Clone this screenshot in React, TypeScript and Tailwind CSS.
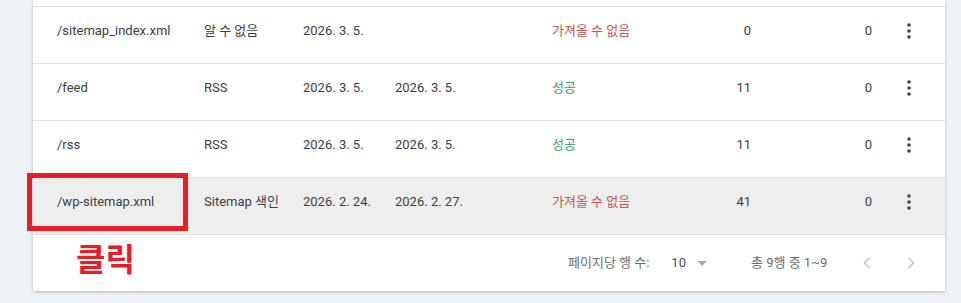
import React from 'react';

type Row = {
  path: string;
  type: string;
  submitted: string;
  read: string;
  status: 'ok' | 'fail';
  pages: string;
  videos: string;
  selected?: boolean;
};

const rows: Row[] = [
  { path: '/sitemap_index.xml', type: '알 수 없음', submitted: '2026. 3. 5.', read: '', status: 'fail', pages: '0', videos: '0' },
  { path: '/feed', type: 'RSS', submitted: '2026. 3. 5.', read: '2026. 3. 5.', status: 'ok', pages: '11', videos: '0' },
  { path: '/rss', type: 'RSS', submitted: '2026. 3. 5.', read: '2026. 3. 5.', status: 'ok', pages: '11', videos: '0' },
  { path: '/wp-sitemap.xml', type: 'Sitemap 색인', submitted: '2026. 2. 24.', read: '2026. 2. 27.', status: 'fail', pages: '41', videos: '0', selected: true },
];

const cols = 'grid grid-cols-[147px_99px_92px_157px_140px_59px_121px_73px]';

const Kebab = () => (
  <svg width="4" height="16" viewBox="0 0 4 16" className="text-[#454545]">
    <circle cx="2" cy="2" r="1.8" fill="currentColor" />
    <circle cx="2" cy="8" r="1.8" fill="currentColor" />
    <circle cx="2" cy="14" r="1.8" fill="currentColor" />
  </svg>
);

const Chevron = ({ dir }: { dir: 'left' | 'right' }) => (
  <svg width="8" height="12" viewBox="0 0 8 12" fill="none" stroke="#c4c4c4" strokeWidth="1.6">
    {dir === 'left' ? <path d="M6.5 1 L1.5 6 L6.5 11" /> : <path d="M1.5 1 L6.5 6 L1.5 11" />}
  </svg>
);

const SitemapRow = ({ row }: { row: Row }) => (
  <div className={`relative border-b border-[#e0e0e0] ${row.selected ? 'bg-[#eeeeee]' : 'bg-white'}`}>
    <div className={`${cols} pl-6 pt-[14px] pb-[22px] text-[13px] leading-5 text-[#3c4043]`}>
      <div>{row.path}</div>
      <div>{row.type}</div>
      <div>{row.submitted}</div>
      <div>{row.read}</div>
      <div className={row.status === 'ok' ? 'text-[#3a9d68]' : 'text-[#cc5550]'}>
        {row.status === 'ok' ? '성공' : '가져올 수 없음'}
      </div>
      <div className="text-right">{row.pages}</div>
      <div className="text-right">{row.videos}</div>
      <div className="flex items-center justify-center">
        <Kebab />
      </div>
    </div>
    {row.selected && (
      <div className="absolute left-[-6px] top-[-5px] w-[161px] h-[58px] border-[5px] border-[#e3202a]" />
    )}
  </div>
);

export default function App() {
  return (
    <div
      className="w-[961px] h-[303px] bg-[#eef1f6] overflow-hidden"
      style={{ fontFamily: 'Roboto, "Noto Sans CJK KR", sans-serif' }}
    >
      <div className="ml-[33px] w-[912px] bg-white shadow-[0_1px_3px_rgba(0,0,0,0.25)]">
        <div className="h-[7px] border-b border-[#e0e0e0]" />
        {rows.map((r) => (
          <SitemapRow key={r.path} row={r} />
        ))}
        <div className="relative h-[56px] flex items-center text-[13px] text-[#6b6f73]">
          <span
            className="absolute left-[43px] top-[6px] text-[32px] leading-none font-bold text-[#e3202a]"
            style={{ fontFamily: '"Noto Sans CJK KR", sans-serif' }}
          >
            클릭
          </span>
          <div className="ml-[535px] flex items-center">
            <span>페이지당 행 수:</span>
            <span className="ml-[22px] text-[#4a4e52]">10</span>
            <svg width="10" height="5" viewBox="0 0 10 5" className="ml-[11px]">
              <path d="M0 0 L10 0 L5 5 Z" fill="#a8a8a8" />
            </svg>
          </div>
          <span className="ml-[44px]">총 9행 중 1~9</span>
          <div className="ml-[36px] flex items-center gap-[36px]">
            <Chevron dir="left" />
            <Chevron dir="right" />
          </div>
        </div>
      </div>
    </div>
  );
}
